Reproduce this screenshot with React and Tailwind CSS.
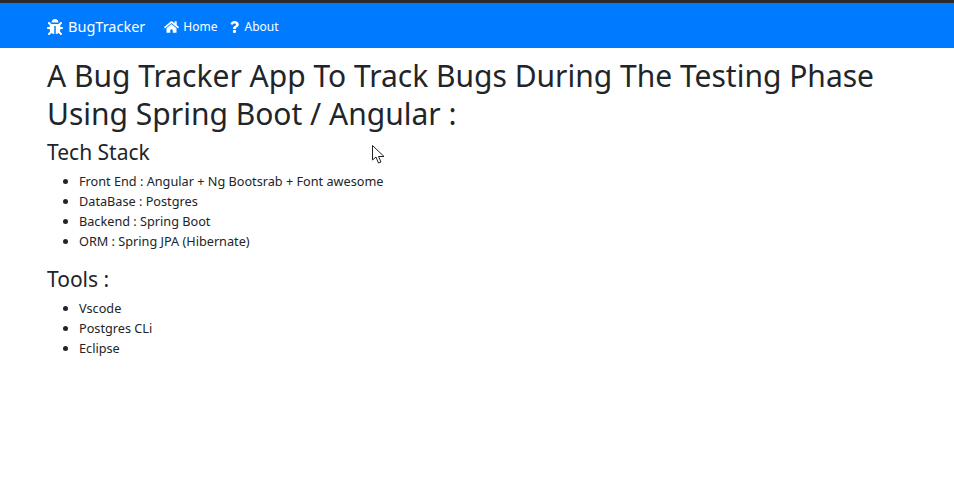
import React from "react";
import { FaBug, FaHome, FaQuestion } from "react-icons/fa";

export default function App() {
  return (
    <div className="min-h-[490px] bg-white font-['Noto_Sans',sans-serif] text-[#212529] relative overflow-hidden">
      <div className="h-[3px] bg-[#2b2b2b]" />
      <nav className="h-[45px] bg-[#007bff] flex items-center pl-[47px] pt-[2px] text-white">
        <FaBug className="w-[16px] h-[16px]" />
        <span className="ml-[5px] text-[14.5px] leading-none">BugTracker</span>
        <FaHome className="ml-[19px] w-[15px] h-[14px]" />
        <span className="ml-[4px] text-[12px] leading-none">Home</span>
        <FaQuestion className="ml-[13px] w-[9px] h-[14px]" />
        <span className="ml-[5px] text-[12px] leading-none">About</span>
      </nav>
      <main className="pl-[47px] pt-[9px]">
        <h1 className="text-[30px] leading-[38px] font-normal">
          A Bug Tracker App To Track Bugs During The Testing Phase
          <br />
          Using Spring Boot / Angular :
        </h1>
        <h3 className="mt-[6px] text-[21px] leading-[27px] font-normal">Tech Stack</h3>
        <ul className="mt-[5px] pl-[32px] list-disc text-[12.7px] leading-[20px]">
          <li>Front End : Angular + Ng Bootsrab + Font awesome</li>
          <li>DataBase : Postgres</li>
          <li>Backend : Spring Boot</li>
          <li>ORM : Spring JPA (Hibernate)</li>
        </ul>
        <h3 className="mt-[15px] text-[21px] leading-[27px] font-normal">Tools :</h3>
        <ul className="mt-[5px] pl-[32px] list-disc text-[12.7px] leading-[20px]">
          <li>Vscode</li>
          <li>Postgres CLi</li>
          <li>Eclipse</li>
        </ul>
      </main>
      <svg className="absolute left-[372px] top-[145px]" width="14" height="20" viewBox="0 0 14 20">
        <path d="M0.5 0.5 L0.5 15 L4 12 L6.5 18 L9 17 L6.5 11.5 L12 11.5 Z" fill="#fff" stroke="#222" strokeWidth="1" />
      </svg>
    </div>
  );
}
